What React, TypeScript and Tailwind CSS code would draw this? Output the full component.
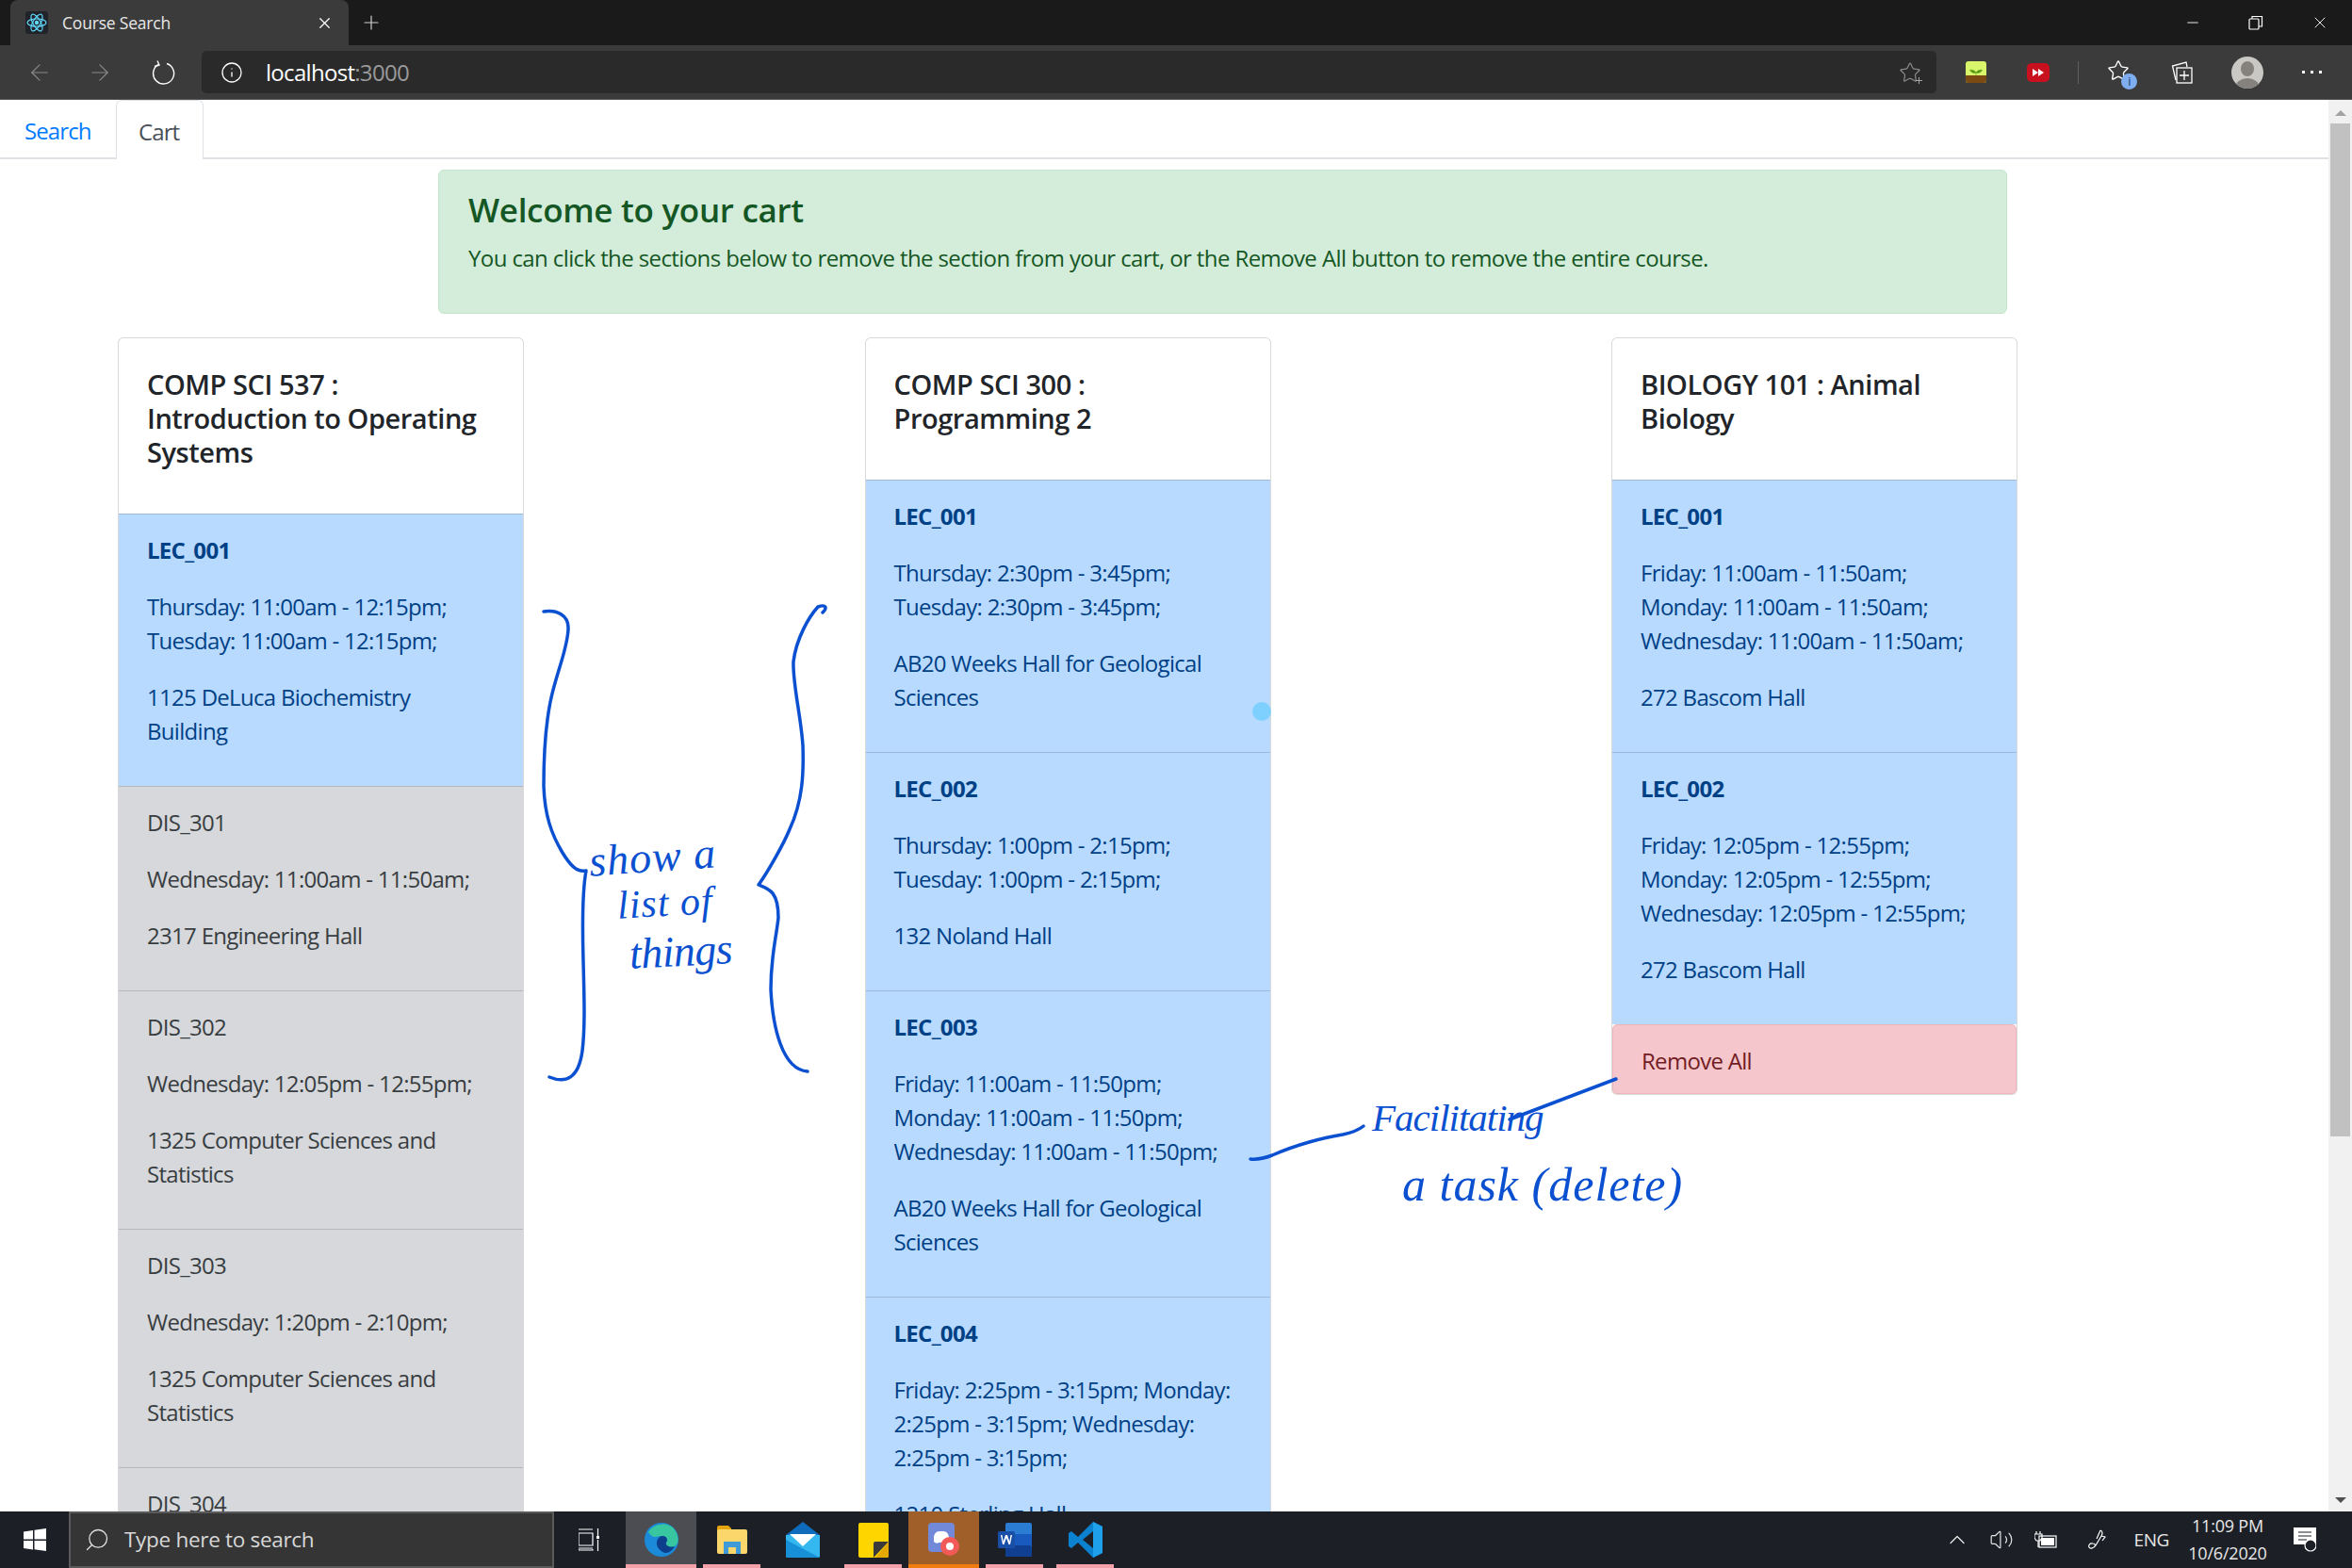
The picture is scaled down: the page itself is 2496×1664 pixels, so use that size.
import { ArrowLeft, ArrowRight, Info, Star, Plus, X, Minus, Search, ChevronUp, Volume2 } from "lucide-react";

type Section = { name: string; times: string[]; place: string[] };
type Course = { title: string[]; sections: Section[]; tone: "blue" | "mixed"; removeAll?: boolean };

const courses: Course[] = [
  {
    title: ["COMP SCI 537 :", "Introduction to Operating", "Systems"],
    tone: "mixed",
    sections: [
      { name: "LEC_001", times: ["Thursday: 11:00am - 12:15pm;", "Tuesday: 11:00am - 12:15pm;"], place: ["1125 DeLuca Biochemistry", "Building"] },
      { name: "DIS_301", times: ["Wednesday: 11:00am - 11:50am;"], place: ["2317 Engineering Hall"] },
      { name: "DIS_302", times: ["Wednesday: 12:05pm - 12:55pm;"], place: ["1325 Computer Sciences and", "Statistics"] },
      { name: "DIS_303", times: ["Wednesday: 1:20pm - 2:10pm;"], place: ["1325 Computer Sciences and", "Statistics"] },
      { name: "DIS_304", times: ["Wednesday: 2:25pm - 3:15pm;"], place: ["1325 Computer Sciences and", "Statistics"] },
    ],
  },
  {
    title: ["COMP SCI 300 :", "Programming 2"],
    tone: "blue",
    sections: [
      { name: "LEC_001", times: ["Thursday: 2:30pm - 3:45pm;", "Tuesday: 2:30pm - 3:45pm;"], place: ["AB20 Weeks Hall for Geological", "Sciences"] },
      { name: "LEC_002", times: ["Thursday: 1:00pm - 2:15pm;", "Tuesday: 1:00pm - 2:15pm;"], place: ["132 Noland Hall"] },
      { name: "LEC_003", times: ["Friday: 11:00am - 11:50pm;", "Monday: 11:00am - 11:50pm;", "Wednesday: 11:00am - 11:50pm;"], place: ["AB20 Weeks Hall for Geological", "Sciences"] },
      { name: "LEC_004", times: ["Friday: 2:25pm - 3:15pm; Monday:", "2:25pm - 3:15pm; Wednesday:", "2:25pm - 3:15pm;"], place: ["1210 Sterling Hall"] },
    ],
  },
  {
    title: ["BIOLOGY 101 : Animal", "Biology"],
    tone: "blue",
    removeAll: true,
    sections: [
      { name: "LEC_001", times: ["Friday: 11:00am - 11:50am;", "Monday: 11:00am - 11:50am;", "Wednesday: 11:00am - 11:50am;"], place: ["272 Bascom Hall"] },
      { name: "LEC_002", times: ["Friday: 12:05pm - 12:55pm;", "Monday: 12:05pm - 12:55pm;", "Wednesday: 12:05pm - 12:55pm;"], place: ["272 Bascom Hall"] },
    ],
  },
];

function SectionRow({ section }: { section: Section }) {
  const lecture = section.name.startsWith("LEC");
  return (
    <div
      className={
        "border-t border-black/15 px-[30px] pt-[20px] pb-[16px] tracking-[-0.7px] " +
        (lecture ? "bg-[#b8daff] text-[#004085]" : "bg-[#d6d8db] text-[#383d41]")
      }
    >
      <p className={"mb-6 " + (lecture ? "font-bold" : "")}>{section.name}</p>
      <div className="mb-6">
        {section.times.map((t) => (
          <p key={t}>{t}</p>
        ))}
      </div>
      <div className="mb-6">
        {section.place.map((t) => (
          <p key={t}>{t}</p>
        ))}
      </div>
    </div>
  );
}

function CourseCard({ course }: { course: Course }) {
  return (
    <div className="w-[431px] shrink-0 self-start rounded-[6px] border border-black/15 bg-white">
      <div className="px-[30px] pt-[31px] pb-[47px] text-[29px] leading-[36px] font-semibold tracking-[-0.45px] text-[#212529]">
        {course.title.map((t) => (
          <p key={t}>{t}</p>
        ))}
      </div>
      {course.sections.map((s) => (
        <SectionRow key={s.name} section={s} />
      ))}
      {course.removeAll && (
        <div className="rounded-[5px] border border-[#eeb6bc] bg-[#f5c6cb] px-[30px] pt-[20px] pb-[16px] tracking-[-0.7px] text-[#721c24]">Remove All</div>
      )}
    </div>
  );
}

function TitleBar() {
  return (
    <div className="flex h-12 items-stretch bg-[#1a1a1a] pl-[11px] text-white">
      <div className="flex w-[359px] items-center rounded-t-[8px] bg-[#3b3b3b] pl-4 pr-4">
        <span className="flex h-6 w-6 items-center justify-center rounded-[3px] bg-[#20232a]">
          <svg width="22" height="22" viewBox="0 0 22 22" fill="none" stroke="#61dafb" strokeWidth="1.200">
            <circle cx="11" cy="11" r="2.200" fill="#61dafb" stroke="none" />
            <ellipse cx="11" cy="11" rx="10" ry="4" />
            <ellipse cx="11" cy="11" rx="10" ry="4" transform="rotate(60 11 11)" />
            <ellipse cx="11" cy="11" rx="10" ry="4" transform="rotate(120 11 11)" />
          </svg>
        </span>
        <span className="ml-[15px] flex-1 text-[17.5px] tracking-[-0.2px] text-[#e8e8e8]">Course Search</span>
        <X size={19} strokeWidth={1.5} />
      </div>
      <div className="ml-[12px] flex items-center">
        <Plus size={24} strokeWidth={1.2} className="text-[#d0d0d0]" />
      </div>
      <div className="ml-auto flex items-center gap-[50px] pr-[24px]">
        <Minus size={18} strokeWidth={1.2} />
        <svg width="16" height="16" viewBox="0 0 16 16" fill="none" stroke="white" strokeWidth="1.2">
          <rect x="1" y="4" width="10" height="11" rx="1" />
          <path d="M4 4V1.500h10.500V12H11" />
        </svg>
        <X size={20} strokeWidth={1.1} />
      </div>
    </div>
  );
}

function AddressBar() {
  return (
    <div className="flex h-[58px] items-center border-b border-[#555] bg-[#3b3b3b] text-white">
      <ArrowLeft size={28} strokeWidth={1} className="ml-[28px] text-[#8a8a8a]" />
      <ArrowRight size={28} strokeWidth={1} className="ml-[36px] text-[#8a8a8a]" />
      <svg className="ml-[40px]" width="26" height="26" viewBox="0 0 26 26" fill="none" stroke="white" strokeWidth="1.400">
        <path d="M8 4.500A11 11 0 1 0 17 3.500" />
        <path d="M7 0.500 9 5 4 6.500" />
      </svg>
      <div className="ml-[28px] flex h-[45px] w-[1841px] items-center rounded-[5px] bg-[#2a2a2a] pr-[16px]">
        <Info size={24} strokeWidth={1.3} className="ml-[20px]" />
        <span className="ml-[24px] text-[24px] leading-none tracking-[-0.7px]">
          localhost<span className="text-[#9a9a9a]">:3000</span>
        </span>
        <span className="relative ml-auto">
          <Star size={24} strokeWidth={1.2} className="text-[#8c8c8c]" />
          <Plus size={11} strokeWidth={2} className="absolute right-[-3px] bottom-[-2px] text-[#b0b0b0]" />
        </span>
      </div>
      <svg className="ml-[31px]" width="22" height="23" viewBox="0 0 22 23">
        <rect width="22" height="23" rx="3" fill="#d8f56c" />
        <path d="M0 15h22v5a3 3 0 0 1-3 3H3a3 3 0 0 1-3-3z" fill="#7a4a12" />
        <path d="M11 15v-4M11 12C9 9 6 9 4.500 9.500 6 12 9 13 11 12zM11 12c2-3 5-3 6.500-2.500C16 12 13 13 11 12z" fill="#5a9a18" stroke="#5a9a18" strokeWidth=".6" />
      </svg>
      <svg className="ml-[43px]" width="24" height="20" viewBox="0 0 24 20">
        <rect width="24" height="20" rx="5" fill="#c8101e" />
        <path d="M6 6l6 4-6 4zM12 6l6 4-6 4z" fill="white" />
      </svg>
      <span className="ml-[30px] h-6 w-px bg-[#5f5f5f]" />
      <span className="relative ml-[30px] h-7 w-8">
        <Star size={24} strokeWidth={1.4} />
        <span className="absolute right-0 bottom-[-4px] flex h-[17px] w-[17px] items-center justify-center rounded-full bg-[#7eaef0] text-[13px] leading-none text-[#1b3a6b]">
          i
        </span>
      </span>
      <svg className="ml-[36px]" width="24" height="24" viewBox="0 0 24 24" fill="none" stroke="white" strokeWidth="1.3">
        <path d="M5 20 1.500 5 16 1l1 5" />
        <rect x="6" y="7" width="16" height="16" fill="#3b3b3b" />
        <path d="M14 10v10M9 15h10" />
      </svg>
      <svg className="ml-[40px]" width="34" height="34" viewBox="0 0 34 34">
        <defs>
          <clipPath id="avatar">
            <ellipse cx="17" cy="17" rx="17" ry="17" />
          </clipPath>
        </defs>
        <circle cx="17" cy="17" r="17" fill="#c9c8c4" />
        <g clipPath="url(#avatar)" fill="#85827e">
          <ellipse cx="17" cy="13" rx="7" ry="8" />
          <ellipse cx="17" cy="33" rx="13" ry="10" />
        </g>
      </svg>
      <span className="ml-[41px] flex gap-[6px]">
        <span className="h-[3px] w-[3px] bg-white" />
        <span className="h-[3px] w-[3px] bg-white" />
        <span className="h-[3px] w-[3px] bg-white" />
      </span>
    </div>
  );
}

function Scrollbar() {
  return (
    <div className="flex w-[25px] shrink-0 flex-col items-center bg-[#f1f1f1] pt-[11px]">
      <span className="h-0 w-0 border-x-[6px] border-b-[6px] border-x-transparent border-b-[#a3a3a3]" />
      <span className="mt-[8px] h-[1075px] w-[21px] bg-[#c1c1c1]" />
      <span className="mt-auto mb-[9px] h-0 w-0 border-x-[6px] border-t-[6px] border-x-transparent border-t-[#505050]" />
    </div>
  );
}

function TaskIcon({ children, tile, line }: { children: React.ReactNode; tile?: string; line?: string }) {
  return (
    <div className={"relative flex h-full w-[75px] items-center justify-center " + (tile ?? "")}>
      {children}
      {line && <span className={"absolute bottom-0 h-1 " + line} />}
    </div>
  );
}

function Taskbar() {
  return (
    <div className="flex h-[60px] shrink-0 items-center bg-[#1c1f26] text-white">
      <div className="flex w-[73px] justify-center">
        <svg width="24" height="24" viewBox="0 0 24 24" fill="white">
          <path d="M0 3.500 10 2v9.500H0zM11.500 1.800 24 0v11.500H11.500zM0 13h10v9.500L0 21zM11.500 13H24v11l-12.500-1.800z" />
        </svg>
      </div>
      <div className="flex h-full w-[515px] items-center border-2 border-[#5a5a5a] bg-[#353535] pl-[14px]">
        <Search size={28} strokeWidth={1.1} className="-scale-x-100 text-[#e0e0e0]" />
        <span className="ml-[15px] text-[22.5px] tracking-[-0.3px] text-[#d8d8d8]">Type here to search</span>
      </div>
      <div className="flex w-[76px] justify-center">
        <svg width="24" height="24" viewBox="0 0 24 24" fill="none" stroke="white" strokeWidth="1.2">
          <path d="M0 1h15M0 5h15v13H0zM0 22v1h15v-1M0 21h15M20.500 0v8M20.500 12v12" />
          <rect x="19" y="8" width="3" height="3" fill="white" stroke="none" />
        </svg>
      </div>
      <TaskIcon tile="bg-[#4c4d52]" line="w-full bg-[#f4a0a8]">
        <svg width="36" height="36" viewBox="0 0 36 36">
          <circle cx="18" cy="18" r="18" fill="#1b8ad8" />
          <path d="M4 10C9 1 26-3 33 9c4 7 3 14-1 16-5 2-11 1-12-3 6 0 6-8-2-8-6 0-8 4-14-4z" fill="#37c6a0" />
          <path d="M14 26c-3-6 1-12 5-12 5 0 6 4 4 7-1 2 2 6 9 4-4 7-11 11-18 1z" fill="#0d3f8c" />
        </svg>
      </TaskIcon>
      <TaskIcon line="w-[61px] bg-[#f4a0a8]">
        <svg width="32" height="32" viewBox="0 0 32 32">
          <path d="M0 3a2 2 0 0 1 2-2h10l3 3v6H0z" fill="#e5a50e" />
          <rect y="5" width="32" height="26" rx="2" fill="#fbd76b" />
          <path d="M7 31V18h18v13h-5v-7h-8v7z" fill="#3f9ad8" />
        </svg>
      </TaskIcon>
      <TaskIcon>
        <svg width="36" height="38" viewBox="0 0 36 38">
          <path d="M0 14 18 0l18 14v22a2 2 0 0 1-2 2H2a2 2 0 0 1-2-2z" fill="#0f6cbd" />
          <path d="M0 14h36v22a2 2 0 0 1-2 2H2a2 2 0 0 1-2-2z" fill="#35b8f0" />
          <path d="M4 13h28L18 26z" fill="white" />
          <path d="M0 19l36 19H2a2 2 0 0 1-2-2z" fill="#1790d8" />
        </svg>
      </TaskIcon>
      <TaskIcon line="w-[61px] bg-[#f4a0a8]">
        <svg width="32" height="37" viewBox="0 0 32 37">
          <rect width="32" height="37" rx="2" fill="#ffd500" />
          <path d="M16 37V22a2 2 0 0 1 2-2h14z" fill="#3a3a3a" />
          <path d="M32 20v15a2 2 0 0 1-2 2H18z" fill="#e4a900" />
        </svg>
      </TaskIcon>
      <TaskIcon tile="bg-[#a05f28]" line="w-full bg-[#f07c10]">
        <svg width="34" height="36" viewBox="0 0 34 36">
          <rect width="28" height="31" rx="4" fill="#7289da" />
          <path d="M6 15c1-5 3-6 8-6s7 1 8 6v5c-2 2-4 2-5 1H11c-1 1-3 1-5-1z" fill="white" />
          <circle cx="23" cy="25" r="10" fill="#f25a5a" />
          <circle cx="23" cy="25" r="4" fill="white" />
        </svg>
      </TaskIcon>
      <TaskIcon line="w-[61px] bg-[#f4a0a8]">
        <svg width="36" height="36" viewBox="0 0 36 36">
          <rect x="8" width="28" height="36" rx="2" fill="#2b7cd3" />
          <rect x="8" y="12" width="28" height="12" fill="#185abd" />
          <rect x="8" y="24" width="28" height="12" rx="2" fill="#103f91" />
          <rect y="9" width="18" height="18" rx="1.500" fill="#1a4fa8" />
          <path d="M3 13l2 10h1.500L9 16l2.500 7H13l2-10h-1.500l-1.200 7L10 13H8l-2.300 7-1.200-7z" fill="white" />
        </svg>
      </TaskIcon>
      <TaskIcon line="w-[61px] bg-[#f4a0a8]">
        <svg width="36" height="38" viewBox="0 0 36 38">
          <path d="M26 0l10 5v28l-10 5L10 22 3 28 0 26V12l3-2 7 6zM26 10 15 19l11 9z" fill="#0a82d0" />
          <path d="M26 0l10 5v28l-10 5z" fill="#1fa0ea" />
        </svg>
      </TaskIcon>
      <div className="ml-auto flex h-full items-center text-[#e8e8e8]">
        <ChevronUp size={28} strokeWidth={1.1} />
        <Volume2 size={26} strokeWidth={1.1} className="ml-[20px]" />
        <svg className="ml-[22px]" width="24" height="18" viewBox="0 0 24 18" fill="none" stroke="white" strokeWidth="1.2">
          <path d="M2 0v3M6 0v3M0 3h8v4l-2 3H2L0 7zM4 10v7" />
          <rect x="5" y="5" width="18" height="12" />
          <rect x="7" y="7" width="14" height="8" fill="white" stroke="none" />
        </svg>
        <svg className="ml-[32px]" width="20" height="22" viewBox="0 0 20 22" fill="none" stroke="white" strokeWidth="1.2">
          <path d="M14 1c3 1 2 4 1 6l-6 10c-2 3-6 4-7 2s1-5 4-4c3 0 3 3 1 4M14 1l-4 9M15 7l4 1-3 4" />
        </svg>
        <span className="ml-[30px] text-[19px] tracking-[-0.4px]">ENG</span>
        <div className="ml-[20px] w-[84px] text-center text-[18px] tracking-[-0.2px] leading-[29px]">
          <p>11:09 PM</p>
          <p>10/6/2020</p>
        </div>
        <svg className="mr-[38px] ml-[28px]" width="24" height="26" viewBox="0 0 24 26">
          <path d="M0 0h24v18h-8l-4 5v-5H0z" fill="white" />
          <path d="M5 5h14M5 9h14M5 13h9" stroke="#1c1f26" strokeWidth="1.2" />
          <circle cx="18" cy="19" r="6" fill="#1c1f26" stroke="white" strokeWidth="1.2" />
        </svg>
      </div>
    </div>
  );
}

// Pen annotations lying over the page: the drawn strokes plus the words as real text
function InkOverlay() {
  const ink = "absolute whitespace-nowrap font-['Liberation_Serif',serif] italic leading-none text-[#0a50d0]";
  return (
    <div className="pointer-events-none absolute inset-0 overflow-hidden">
      <svg className="absolute inset-0" width="2496" height="1664" fill="none" stroke="#0a50d0" strokeWidth="3.5" strokeLinecap="round" strokeLinejoin="round">
        <circle cx="1339" cy="755" r="10" fill="#7ed0ff" stroke="none" />
        <path d="M577 649C590 647 604 652 603 668C602 690 590 715 584 745C578 775 577 805 577 834C578 865 585 885 597 905C605 918 612 926 622 924C618 945 618 985 619 1020C620 1060 621 1090 618 1115C614 1145 600 1150 583 1143" />
        <path d="M873 650C878 645 877 641 868 644C858 655 845 678 842 702C841 725 850 760 852 791C853 820 852 850 838 880C832 895 815 925 805 939C815 943 826 945 826 974C823 1000 818 1015 818 1050C820 1090 830 1135 857 1137" />
        <path d="M1327 1230C1335 1231 1342 1229 1350 1226C1375 1215 1405 1207 1425 1204C1435 1202 1442 1199 1447 1195" />
        <path d="M1602 1188L1715 1145" />
      </svg>
      <span className={ink + " top-[887px] left-[625px] -rotate-[4deg] text-[46px] tracking-[1px]"}>show a</span>
      <span className={ink + " top-[937px] left-[655px] -rotate-[3deg] text-[42px] tracking-[1px]"}>list of</span>
      <span className={ink + " top-[987px] left-[668px] -rotate-[3deg] text-[46px]"}>things</span>
      <span className={ink + " top-[1166px] left-[1456px] text-[41px] tracking-[-1px]"}>Facilitating</span>
      <span className={ink + " top-[1232px] left-[1488px] text-[50px] tracking-[1px]"}>a task (delete)</span>
    </div>
  );
}

export default function App() {
  return (
    <div className="relative flex h-screen flex-col overflow-hidden bg-white font-['Open_Sans',sans-serif] text-[24px] leading-[36px] tracking-[-0.6px]">
      <TitleBar />
      <AddressBar />
      <div className="flex min-h-0 flex-1">
        <main className="min-w-0 flex-1 overflow-hidden">
          <nav className="flex h-[63px] border-b-2 border-[#dee2e6] tracking-[-0.9px]">
            <a className="flex h-[62px] w-[123px] items-center pt-[3px] pl-[26px] text-[#007bff]">Search</a>
            <a className="flex h-[63px] w-[93px] items-center rounded-t-[6px] border-x border-t border-[#dee2e6] bg-white pt-[3px] pl-[23px] text-[#495057]">Cart</a>
          </nav>
          <div className="mt-[11px] ml-[465px] w-[1665px] rounded-[6px] border border-[#c3e6cb] bg-[#d4edda] px-[31px] pt-[20px] pb-[16px] text-[#155724]">
            <h4 className="mb-3 text-[35px] leading-[43px] font-semibold tracking-[-0.3px]">Welcome to your cart</h4>
            <p className="mb-6">You can click the sections below to remove the section from your cart, or the Remove All button to remove the entire course.</p>
          </div>
          <div className="mt-[25px] flex gap-x-[361.5px] pl-[125px]">
            {courses.map((c) => (
              <CourseCard key={c.title[0]} course={c} />
            ))}
          </div>
        </main>
        <Scrollbar />
      </div>
      <Taskbar />
      <InkOverlay />
    </div>
  );
}
